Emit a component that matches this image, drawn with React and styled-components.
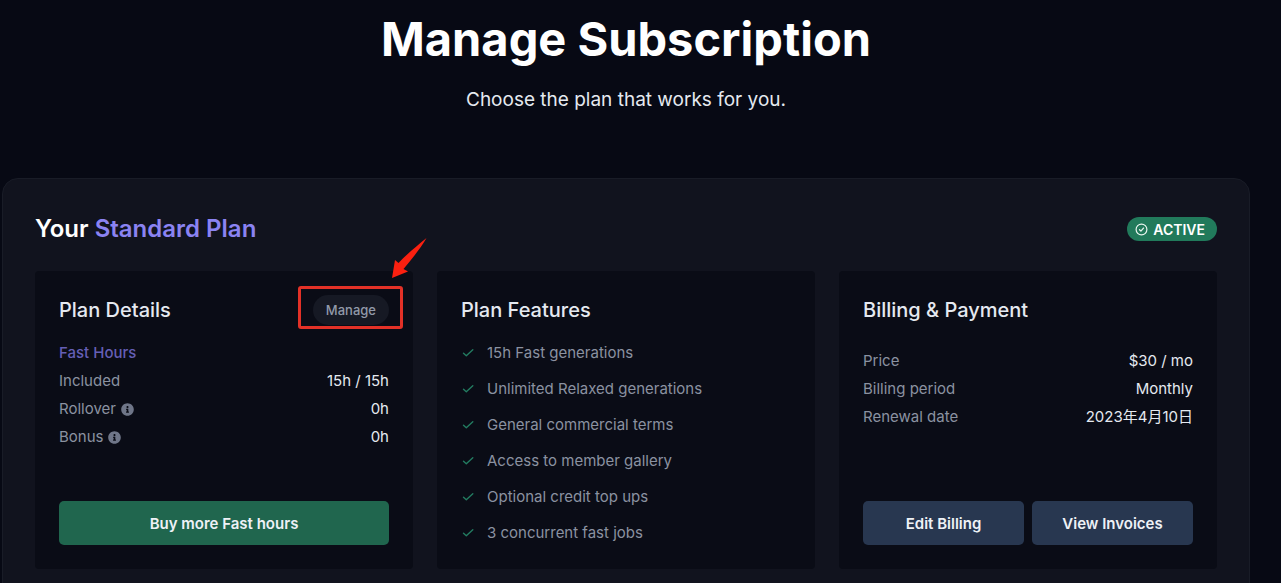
import styled, { createGlobalStyle } from "styled-components";
import { FaInfoCircle } from "react-icons/fa";

const GlobalStyle = createGlobalStyle`
  * {
    box-sizing: border-box;
  }

  html {
    overflow: hidden;
  }

  body {
    margin: 0;
    background-color: #070914;
    color: #e5e9f0;
    font-family: "Inter", "Noto Sans CJK SC", sans-serif;
    font-size: 15px;
  }

  button {
    font-family: inherit;
    cursor: pointer;
  }
`;

const Page = styled.main`
  padding: 4px 31px 12px 2px;
`;

const Header = styled.header`
  text-align: center;
  margin-bottom: 63px;
`;

const Title = styled.h1`
  margin: 0 0 11px;
  color: #ffffff;
  font-size: 47px;
  font-weight: 700;
  line-height: 70px;
`;

const Subtitle = styled.p`
  margin: 0;
  font-size: 19px;
  line-height: 30px;
`;

const Panel = styled.section`
  padding: 32px;
  border: 1px solid #191c27;
  border-radius: 16px;
  background-color: #11131e;
`;

const PanelHeader = styled.div`
  display: flex;
  align-items: center;
  justify-content: space-between;
  margin-bottom: 24px;
`;

const PlanName = styled.h2`
  margin: 0;
  color: #ffffff;
  font-size: 24px;
  font-weight: 600;
  line-height: 36px;

  span {
    color: #8b83f2;
  }
`;

const Status = styled.span`
  display: flex;
  align-items: center;
  gap: 5px;
  height: 24px;
  padding: 0 12px 0 8px;
  border-radius: 12px;
  background-color: #217a5b;
  color: #ffffff;
  font-size: 14px;
  font-weight: 600;
`;

const Cards = styled.div`
  display: grid;
  grid-template-columns: repeat(3, 1fr);
  gap: 24px;
`;

const Card = styled.article`
  display: flex;
  flex-direction: column;
  padding: 24px;
  border-radius: 4px;
  background-color: #0a0c16;
`;

const CardHeader = styled.div`
  display: flex;
  align-items: center;
  justify-content: space-between;
  height: 30px;
`;

const CardTitle = styled.h3`
  margin: 0;
  font-size: 20px;
  font-weight: 500;
  line-height: 30px;
`;

const ManageWrapper = styled.div`
  position: relative;
`;

const ManageButton = styled.button`
  display: block;
  height: 30px;
  padding: 0 13px;
  border: 0;
  border-radius: 15px;
  background-color: #161924;
  color: #9299a9;
  font-size: 13px;
  font-weight: 500;
`;

const Highlight = styled.div`
  position: absolute;
  inset: -9px -14px -4px -15px;
  border: 3px solid #e33127;
  border-radius: 3px;
  pointer-events: none;
`;

const Arrow = styled.svg`
  position: absolute;
  top: -58px;
  right: -38px;
  pointer-events: none;
`;

const GroupTitle = styled.h4`
  margin: 0;
  color: #655fb5;
  font-size: 15px;
  font-weight: 500;
  line-height: 28px;
`;

const Details = styled.dl`
  margin: ${(props) => (props.$spaced ? "22px" : "0")} 0 0;
`;

const DetailRow = styled.div`
  display: flex;
  justify-content: space-between;
  line-height: 28px;

  dt {
    display: flex;
    align-items: center;
    gap: 5px;
    color: #8b92a1;
  }

  dd {
    margin: 0;
  }

  svg {
    color: #6f7688;
  }
`;

const Group = styled.div`
  margin-top: 14px;
`;

const FeatureList = styled.ul`
  display: flex;
  flex-direction: column;
  gap: 12px;
  margin: 16px 0 0;
  padding: 0;
  list-style: none;
`;

const Feature = styled.li`
  display: flex;
  align-items: center;
  gap: 12px;
  color: #8b92a1;
  line-height: 24px;
`;

const Actions = styled.div`
  display: flex;
  gap: 8px;
  margin-top: auto;
`;

const ActionButton = styled.button`
  flex: 1;
  height: 44px;
  border: 0;
  border-radius: 5px;
  background-color: ${(props) => (props.$primary ? "#20664e" : "#283750")};
  color: #eef1f6;
  font-size: 15px;
  font-weight: 600;
`;

const CheckIcon = () => (
  <svg width="14" height="14" viewBox="0 0 14 14" fill="none" aria-hidden="true">
    <path
      d="M2.5 7.2L5.3 9.8L11.8 3.8"
      stroke="#237c61"
      strokeWidth="1.4"
      strokeLinecap="round"
      strokeLinejoin="round"
    />
  </svg>
);

const StatusIcon = () => (
  <svg width="13" height="13" viewBox="0 0 13 13" fill="none" aria-hidden="true">
    <circle cx="6.5" cy="6.5" r="5.4" stroke="#e8f5ef" strokeWidth="1.2" />
    <path
      d="M4.5 6.8L5.9 8.1L8.5 5.1"
      stroke="#e8f5ef"
      strokeWidth="1.3"
      strokeLinecap="round"
      strokeLinejoin="round"
    />
  </svg>
);

const hours = [
  { label: "Included", value: "15h / 15h" },
  { label: "Rollover", value: "0h", info: true },
  { label: "Bonus", value: "0h", info: true },
];

const features = [
  "15h Fast generations",
  "Unlimited Relaxed generations",
  "General commercial terms",
  "Access to member gallery",
  "Optional credit top ups",
  "3 concurrent fast jobs",
];

const billing = [
  { label: "Price", value: "$30 / mo" },
  { label: "Billing period", value: "Monthly" },
  { label: "Renewal date", value: "2023年4月10日" },
];

const DetailList = ({ items, spaced }) => (
  <Details $spaced={spaced}>
    {items.map((item) => (
      <DetailRow key={item.label}>
        <dt>
          {item.label}
          {item.info && <FaInfoCircle size={13} />}
        </dt>
        <dd>{item.value}</dd>
      </DetailRow>
    ))}
  </Details>
);

const App = () => {
  return (
    <Page>
      <GlobalStyle />
      <Header>
        <Title>Manage Subscription</Title>
        <Subtitle>Choose the plan that works for you.</Subtitle>
      </Header>
      <Panel>
        <PanelHeader>
          <PlanName>
            Your <span>Standard Plan</span>
          </PlanName>
          <Status>
            <StatusIcon />
            ACTIVE
          </Status>
        </PanelHeader>
        <Cards>
          <Card>
            <CardHeader>
              <CardTitle>Plan Details</CardTitle>
              <ManageWrapper>
                <ManageButton type="button">Manage</ManageButton>
                <Highlight />
                <Arrow width="36" height="42" viewBox="0 0 36 42" aria-hidden="true">
                  <path
                    d="M35.5 1C27 8 17 16 7.5 26L4 23L1 41L17 34.5L12.5 32C21 22 29 12 35.5 1Z"
                    fill="#fb2010"
                  />
                </Arrow>
              </ManageWrapper>
            </CardHeader>
            <Group>
              <GroupTitle>Fast Hours</GroupTitle>
              <DetailList items={hours} />
            </Group>
            <Actions>
              <ActionButton type="button" $primary>
                Buy more Fast hours
              </ActionButton>
            </Actions>
          </Card>
          <Card>
            <CardHeader>
              <CardTitle>Plan Features</CardTitle>
            </CardHeader>
            <FeatureList>
              {features.map((feature) => (
                <Feature key={feature}>
                  <CheckIcon />
                  {feature}
                </Feature>
              ))}
            </FeatureList>
          </Card>
          <Card>
            <CardHeader>
              <CardTitle>Billing &amp; Payment</CardTitle>
            </CardHeader>
            <DetailList items={billing} spaced />
            <Actions>
              <ActionButton type="button">Edit Billing</ActionButton>
              <ActionButton type="button">View Invoices</ActionButton>
            </Actions>
          </Card>
        </Cards>
      </Panel>
    </Page>
  );
};

export default App;
